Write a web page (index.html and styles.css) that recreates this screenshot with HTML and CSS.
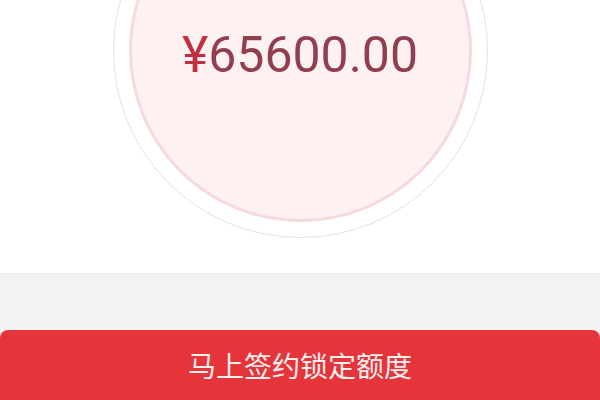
FILE: index.html
```html
<!DOCTYPE html>
<html lang="zh-CN">
<head>
<meta charset="utf-8">
<title>额度</title>
<link rel="stylesheet" href="styles.css">
</head>
<body>
<div class="page">
  <section class="hero">
    <div class="ring">
      <div class="disc">
        <div class="amount"><span class="yen">¥</span>65600.00</div>
      </div>
    </div>
  </section>
  <div class="band"></div>
  <div class="footer">
    <button class="cta">马上签约锁定额度</button>
  </div>
</div>
</body>
</html>
```
FILE: styles.css
```css
html, body {
  margin: 0;
  padding: 0;
  background: #ffffff;
}
.page {
  width: 600px;
  height: 400px;
  overflow: hidden;
  background: #ffffff;
  display: flex;
  flex-direction: column;
}
.hero {
  height: 273px;
  flex-shrink: 0;
  display: flex;
  justify-content: center;
  overflow: hidden;
}
.ring {
  width: 375px;
  height: 375px;
  flex-shrink: 0;
  margin-top: -137px;
  border-radius: 50%;
  border: 1.5px solid #e4e2e5;
  box-sizing: border-box;
  background: #ffffff;
  display: flex;
  align-items: center;
  justify-content: center;
}
.disc {
  width: 343px;
  height: 343px;
  border-radius: 50%;
  background: #fdf1f2;
  border: 3px solid #f6dadc;
  box-sizing: border-box;
  display: flex;
  align-items: center;
  justify-content: center;
}
.amount {
  font-family: Roboto, "Liberation Sans", sans-serif;
  font-size: 50px;
  line-height: 1;
  color: #913f4f;
  padding-top: 8px;
}
.yen {
  color: #c0303f;
}
.band {
  height: 55px;
  flex-shrink: 0;
  background: #f2f2f2;
  border-top: 1px solid #ededed;
  border-bottom: 1px solid #fbf3f3;
}
.footer {
  flex: 1;
  background: #fbf4f4;
  display: flex;
}
.cta {
  flex: 1;
  margin: 0;
  border: none;
  border-radius: 8px 8px 0 0;
  background: #e6343b;
  color: #f8eeee;
  font-family: "Noto Sans CJK SC", "Noto Sans", sans-serif;
  font-size: 28px;
  line-height: 28px;
  padding: 21px 0 0;
  display: flex;
  justify-content: center;
  align-items: flex-start;
}
```
